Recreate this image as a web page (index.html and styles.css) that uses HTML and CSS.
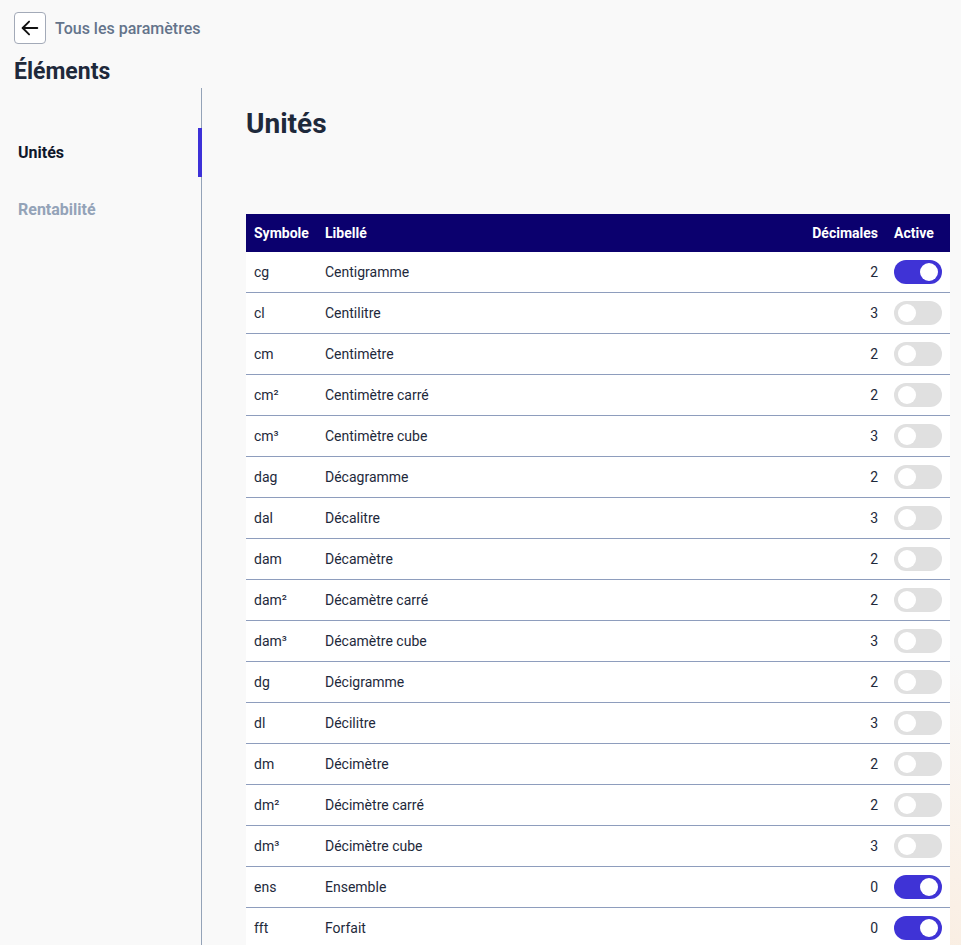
FILE: index.html
```html
<!DOCTYPE html>
<html lang="fr">
<head>
<meta charset="utf-8">
<title>Unités</title>
<link rel="stylesheet" href="styles.css">
</head>
<body>
<div class="deco"></div>
<div class="page">
  <header class="top">
    <a class="back" href="#">
      <span class="back-btn">
        <svg width="22" height="22" viewBox="0 0 24 24" fill="none" stroke="#111" stroke-width="2" stroke-linecap="round" stroke-linejoin="round"><path d="M20 12H4"/><path d="M11 5l-7 7 7 7"/></svg>
      </span>
      <span class="back-label">Tous les paramètres</span>
    </a>
    <h1 class="section-title">Éléments</h1>
  </header>
  <div class="layout">
    <nav class="side">
      <a class="side-item active" href="#">Unités</a>
      <a class="side-item" href="#">Rentabilité</a>
    </nav>
    <main class="main">
      <h2 class="main-title">Unités</h2>
      <table class="units">
        <thead>
          <tr><th class="c-sym">Symbole</th><th class="c-lab">Libellé</th><th class="c-dec">Décimales</th><th class="c-act">Active</th></tr>
        </thead>
        <tbody>
          <tr><td>cg</td><td>Centigramme</td><td class="num">2</td><td><span class="toggle on"></span></td></tr>
          <tr><td>cl</td><td>Centilitre</td><td class="num">3</td><td><span class="toggle"></span></td></tr>
          <tr><td>cm</td><td>Centimètre</td><td class="num">2</td><td><span class="toggle"></span></td></tr>
          <tr><td>cm²</td><td>Centimètre carré</td><td class="num">2</td><td><span class="toggle"></span></td></tr>
          <tr><td>cm³</td><td>Centimètre cube</td><td class="num">3</td><td><span class="toggle"></span></td></tr>
          <tr><td>dag</td><td>Décagramme</td><td class="num">2</td><td><span class="toggle"></span></td></tr>
          <tr><td>dal</td><td>Décalitre</td><td class="num">3</td><td><span class="toggle"></span></td></tr>
          <tr><td>dam</td><td>Décamètre</td><td class="num">2</td><td><span class="toggle"></span></td></tr>
          <tr><td>dam²</td><td>Décamètre carré</td><td class="num">2</td><td><span class="toggle"></span></td></tr>
          <tr><td>dam³</td><td>Décamètre cube</td><td class="num">3</td><td><span class="toggle"></span></td></tr>
          <tr><td>dg</td><td>Décigramme</td><td class="num">2</td><td><span class="toggle"></span></td></tr>
          <tr><td>dl</td><td>Décilitre</td><td class="num">3</td><td><span class="toggle"></span></td></tr>
          <tr><td>dm</td><td>Décimètre</td><td class="num">2</td><td><span class="toggle"></span></td></tr>
          <tr><td>dm²</td><td>Décimètre carré</td><td class="num">2</td><td><span class="toggle"></span></td></tr>
          <tr><td>dm³</td><td>Décimètre cube</td><td class="num">3</td><td><span class="toggle"></span></td></tr>
          <tr><td>ens</td><td>Ensemble</td><td class="num">0</td><td><span class="toggle on"></span></td></tr>
          <tr><td>fft</td><td>Forfait</td><td class="num">0</td><td><span class="toggle on"></span></td></tr>
        </tbody>
      </table>
    </main>
  </div>
</div>
</body>
</html>
```
FILE: styles.css
```css
* { box-sizing: border-box; }
html, body { margin: 0; padding: 0; }
body {
  font-family: Roboto, "Liberation Sans", sans-serif;
  background: #f9f9f9;
  color: #1e293b;
  height: 945px;
  overflow: hidden;
  position: relative;
}
.deco {
  position: absolute;
  left: 0; top: 0; right: 0; bottom: 0;
  background: radial-gradient(ellipse 520px 420px at 820px 1060px, #f8e8d6 0%, #faf0e6 45%, rgba(249,249,249,0) 100%);
  pointer-events: none;
}
.page { position: relative; }
.top { padding: 12px 0 0 14px; }
.back {
  display: flex;
  align-items: center;
  gap: 9px;
  text-decoration: none;
}
.back-btn {
  width: 32px; height: 32px;
  border: 1px solid #a3aab8;
  border-radius: 4px;
  background: #fff;
  display: flex; align-items: center; justify-content: center;
}
.back-label { font-size: 16px; color: #64748b; font-weight: 500; }
.section-title {
  margin: 14px 0 0 0;
  font-size: 23px;
  font-weight: 700;
  color: #1e293b;
  line-height: 28px;
}
.layout {
  display: flex;
  margin-top: 2px;
}
.side {
  width: 202px;
  border-right: 1px solid #94a3b8;
  min-height: 860px;
  padding-top: 40px;
  display: flex;
  flex-direction: column;
}
.side-item {
  display: block;
  height: 49px;
  line-height: 49px;
  padding-left: 18px;
  font-size: 16px;
  font-weight: 700;
  color: #94a3b8;
  text-decoration: none;
  margin-right: -1px;
  border-right: 4px solid transparent;
  margin-bottom: 8px;
}
.side-item.active { color: #0f172a; border-right-color: #3d31d8; }
.main {
  flex: 1;
  padding: 20px 11px 0 44px;
}
.main-title {
  margin: 0;
  font-size: 28px;
  font-weight: 700;
  line-height: 32px;
  color: #1e293b;
}
.units {
  margin-top: 74px;
  width: 100%;
  border-collapse: separate;
  border-spacing: 0;
  background: #fff;
  font-size: 14px;
}
.units th {
  background: #0b006e;
  color: #fff;
  font-weight: 700;
  text-align: left;
  height: 38px;
  padding: 0 8px;
  font-size: 14px;
}
.units th.c-sym { width: 71px; }
.units th.c-dec { text-align: right; width: 82px; }
.units th.c-act { width: 64px; }
.units td {
  height: 41px;
  padding: 0 8px;
  border-bottom: 1px solid #8e9dbd;
  color: #1e293b;
  vertical-align: middle;
}
.units td.num { text-align: right; }
.toggle {
  display: block;
  position: relative;
  width: 48px;
  height: 24px;
  border-radius: 12px;
  background: #e0e0e0;
}
.toggle::after {
  content: "";
  position: absolute;
  top: 3px; left: 4px;
  width: 18px; height: 18px;
  border-radius: 50%;
  background: #fff;
}
.toggle.on { background: #3f33d6; }
.toggle.on::after { left: auto; right: 4px; }
```
